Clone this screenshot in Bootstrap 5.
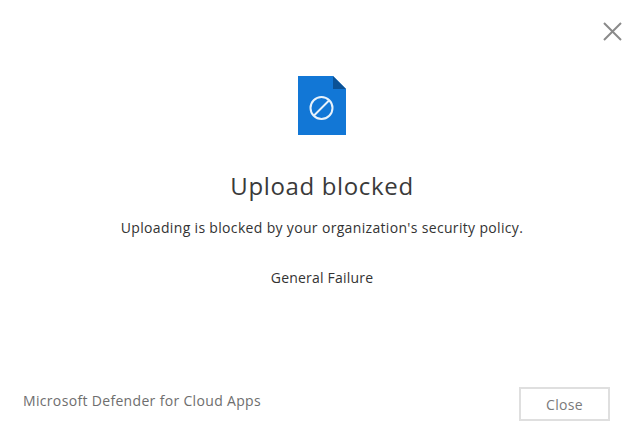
<!DOCTYPE html>
<html lang="en">
<head>
    <meta charset="UTF-8">
    <meta name="viewport" content="width=device-width, initial-scale=1.0">
    <title>Upload blocked</title>
    <link href="https://cdn.jsdelivr.net/npm/bootstrap@5.3.0/dist/css/bootstrap.min.css" rel="stylesheet">
    <style>
      html, body { height: 100%; }
      body {
          font-family: "Open Sans", "Noto Sans", sans-serif;
          color: #333;
          background: #fff;
      }
      .dialog-box { height: 432px; }
      .dialog-x {
          top: 22px;
          right: 13px;
          width: 19px;
          height: 19px;
          line-height: 0;
      }
      .dialog-body { padding-top: 76px; padding-left: 9px; }
      .file-icon { display: block; width: 48px; height: 59px; margin-bottom: 35px; }
      .dialog-title { font-size: 24px; line-height: 32px; font-weight: 400; margin-bottom: 16px; color: #3a3a3a; letter-spacing: .65px; }
      .dialog-msg { font-size: 14px; line-height: 20px; margin-bottom: 30px; letter-spacing: .33px; }
      .dialog-sub { letter-spacing: .2px; }
      .dialog-foot { padding: 0 25px 11px 23px; }
      .brand-text { font-size: 14px; line-height: 20px; color: #6e6e6e; margin-bottom: 10px; letter-spacing: .33px; }
      .btn-close-plain {
          width: 91px;
          height: 34px;
          padding: 0;
          font-size: 14px;
          letter-spacing: .3px;
          color: #7a7a7a;
          background: #fff;
          border: 2px solid #dfdfdf;
          border-radius: 0;
      }
    </style>
</head>
<body>
    <div class="dialog-box position-relative d-flex flex-column">
        <button type="button" class="dialog-x position-absolute border-0 bg-transparent p-0" aria-label="Close">
            <svg width="19" height="19" viewBox="0 0 19 19"><path d="M1 1 L18 18 M18 1 L1 18" stroke="#8a8a8a" stroke-width="2" fill="none"/></svg>
        </button>
        <div class="dialog-body flex-grow-1 d-flex flex-column align-items-center text-center">
            <svg class="file-icon" viewBox="0 0 48 59">
                <path d="M0 0 H35 L48 13 V59 H0 Z" fill="#1277d6"/>
                <path d="M35 0 L48 13 H35 Z" fill="#0b5296"/>
                <circle cx="23.500" cy="32" r="11" fill="none" stroke="#e8f2fb" stroke-width="2"/>
                <path d="M16 39.500 L31 24.500" stroke="#e8f2fb" stroke-width="2"/>
            </svg>
            <h1 class="dialog-title">Upload blocked</h1>
            <p class="dialog-msg">Uploading is blocked by your organization's security policy.</p>
            <p class="dialog-msg dialog-sub mb-0">General Failure</p>
        </div>
        <div class="dialog-foot d-flex justify-content-between align-items-end">
            <div class="brand-text">Microsoft Defender for Cloud Apps</div>
            <button type="button" class="btn btn-close-plain">Close</button>
        </div>
    </div>
    <script src="https://cdn.jsdelivr.net/npm/bootstrap@5.3.0/dist/js/bootstrap.bundle.min.js"></script>
</body>
</html>
